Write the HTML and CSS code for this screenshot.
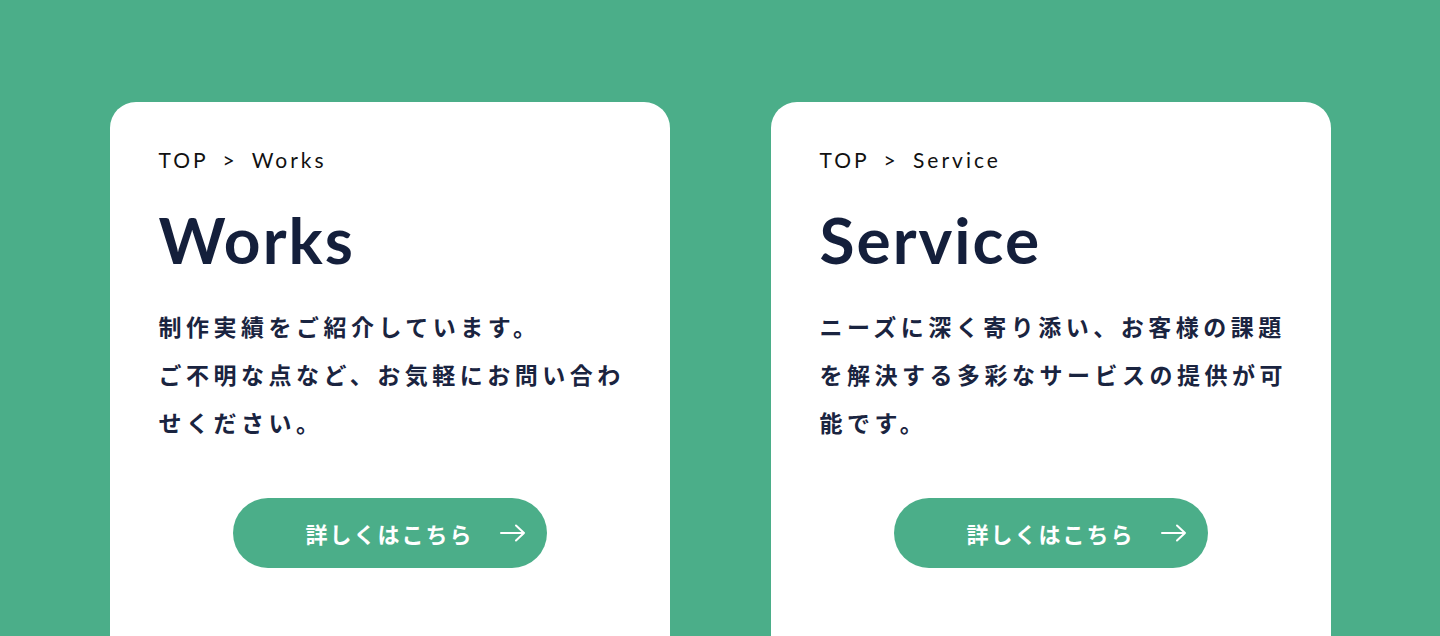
FILE: index.html
```html
<!DOCTYPE html>
<html lang="ja">
<head>
    <meta charset="UTF-8">
    <meta name="viewport" content="width=device-width, initial-scale=1.0">
    <title>Works / Service</title>
<link rel="stylesheet" href="styles.css">
</head>
<body>
    <main class="cards">
        <section class="card">
            <p class="breadcrumb">TOP &gt; Works</p>
            <h2 class="card-title">Works</h2>
            <p class="card-text">制作実績をご紹介しています。<br>ご不明な点など、お気軽にお問い合わせください。</p>
            <a class="more-btn" href="#">
                <span class="more-label">詳しくはこちら</span>
                <svg class="more-arrow" width="26" height="18" viewBox="0 0 26 18"><path d="M1 9H24M16 1.5L24 9L16 16.5" fill="none" stroke="#fff" stroke-width="2" stroke-linecap="round" stroke-linejoin="round"/></svg>
            </a>
        </section>
        <section class="card">
            <p class="breadcrumb">TOP &gt; Service</p>
            <h2 class="card-title">Service</h2>
            <p class="card-text">ニーズに深く寄り添い、お客様の課題を解決する多彩なサービスの提供が可能です。</p>
            <a class="more-btn" href="#">
                <span class="more-label">詳しくはこちら</span>
                <svg class="more-arrow" width="26" height="18" viewBox="0 0 26 18"><path d="M1 9H24M16 1.5L24 9L16 16.5" fill="none" stroke="#fff" stroke-width="2" stroke-linecap="round" stroke-linejoin="round"/></svg>
            </a>
        </section>
    </main>
</body>
</html>
```

FILE: styles.css
```css
/* Página general */
body {
    margin: 0;
    height: 636px;
    overflow: hidden;
    background-color: #4bae89;
    font-family: 'Lato', 'Noto Sans CJK JP', sans-serif;
}

/* Contenedor de tarjetas */
.cards {
    display: flex;
    justify-content: center;
    gap: 101px;
    padding-top: 102px;
}

.card {
    width: 560px;
    height: 534px;
    box-sizing: border-box;
    padding: 44px 40px 0 49px;
    background-color: #fff;
    border-radius: 26px 26px 0 0;
}

/* Migas de pan */
.breadcrumb {
    margin: 0;
    font-size: 21px;
    line-height: 28px;
    letter-spacing: 3px;
    word-spacing: 6px;
    color: #111;
}

/* Título */
.card-title {
    margin: 26px 0 0;
    font-size: 64px;
    line-height: 80px;
    font-weight: 700;
    letter-spacing: 2px;
    color: #141f3b;
}

/* Texto */
.card-text {
    margin: 22px 0 0;
    font-family: 'Noto Sans CJK JP', sans-serif;
    font-size: 23px;
    font-weight: 700;
    line-height: 48px;
    letter-spacing: 4.5px;
    color: #1a2440;
}

/* Botón */
.more-btn {
    display: flex;
    align-items: center;
    width: 314px;
    height: 70px;
    box-sizing: border-box;
    margin: 52px 0 0 74px;
    padding-left: 73px;
    border-radius: 35px;
    background-color: #4bae89;
    color: #fff;
    text-decoration: none;
}

.more-label {
    font-family: 'Noto Sans CJK JP', sans-serif;
    font-size: 22px;
    font-weight: 700;
    letter-spacing: 2px;
}

.more-arrow {
    margin-left: 26px;
}
```
